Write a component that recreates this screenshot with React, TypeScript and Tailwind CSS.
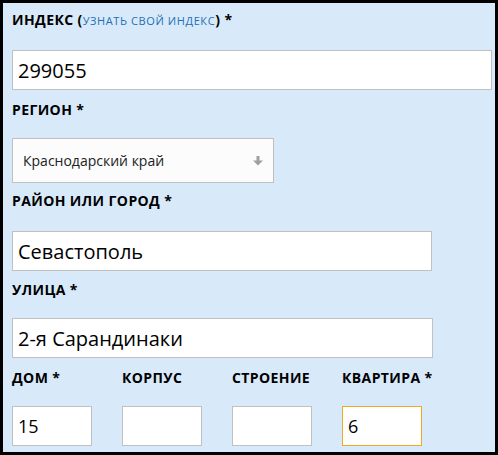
import React from "react";

const labelCls =
  "block text-[14px] leading-[20px] font-bold text-black uppercase tracking-[0.4px]";
const inputCls =
  "h-[40px] border border-[#c0c0c0] bg-white px-[5px] text-[20px] text-black outline-none font-['Open_Sans',sans-serif]";

export default function App() {
  return (
    <div className="w-[498px] h-[455px] bg-black p-[3px]">
      <div className="w-full h-full bg-[#d8eaf9] px-[9px] pt-[7px] font-['Open_Sans',sans-serif] overflow-hidden">
        <label className={labelCls}>
          Индекс (
          <span className="text-[11px] font-normal text-[#1f6fb8] tracking-[0.6px]">
            узнать свой индекс
          </span>
          ) *
        </label>
        <input
          className={`${inputCls} w-[480px] mt-[19px] block`}
          defaultValue="299055"
          readOnly
        />
        <label className={`${labelCls} mt-[10px]`}>Регион *</label>
        <div className="mt-[18px] w-[262px] h-[45px] border border-[#c0c0c0] bg-[#fcfcfc] flex items-center justify-between pl-[10px] pr-[10px]">
          <span className="text-[14px] text-[#222]">Краснодарский край</span>
          <svg width="10" height="10" viewBox="0 0 10 10">
            <rect x="3.5" y="0" width="3" height="5" fill="#a0a0a0" />
            <polygon points="0,4.5 10,4.5 5,9.5" fill="#a0a0a0" />
          </svg>
        </div>
        <label className={`${labelCls} mt-[8px]`}>Район или город *</label>
        <input
          className={`${inputCls} w-[420px] mt-[20px] block`}
          defaultValue="Севастополь"
          readOnly
        />
        <label className={`${labelCls} mt-[9px]`}>Улица *</label>
        <input
          className={`${inputCls} w-[421px] mt-[18px] block`}
          defaultValue="2-я Сарандинаки"
          readOnly
        />
        <div className="mt-[10px] flex gap-[30px]">
          {[
            { l: "Дом *", v: "15", f: false },
            { l: "Корпус", v: "", f: false },
            { l: "Строение", v: "", f: false },
            { l: "Квартира *", v: "6", f: true },
          ].map((c) => (
            <div key={c.l} className="w-[80px]">
              <label className={`${labelCls} whitespace-nowrap`}>{c.l}</label>
              <input
                className={`h-[40px] w-[80px] border ${
                  c.f ? "border-[#f5a623]" : "border-[#c0c0c0]"
                } bg-white px-[5px] text-[18px] text-black outline-none mt-[18px] block font-['Open_Sans',sans-serif]`}
                defaultValue={c.v}
                readOnly
              />
            </div>
          ))}
        </div>
      </div>
    </div>
  );
}
